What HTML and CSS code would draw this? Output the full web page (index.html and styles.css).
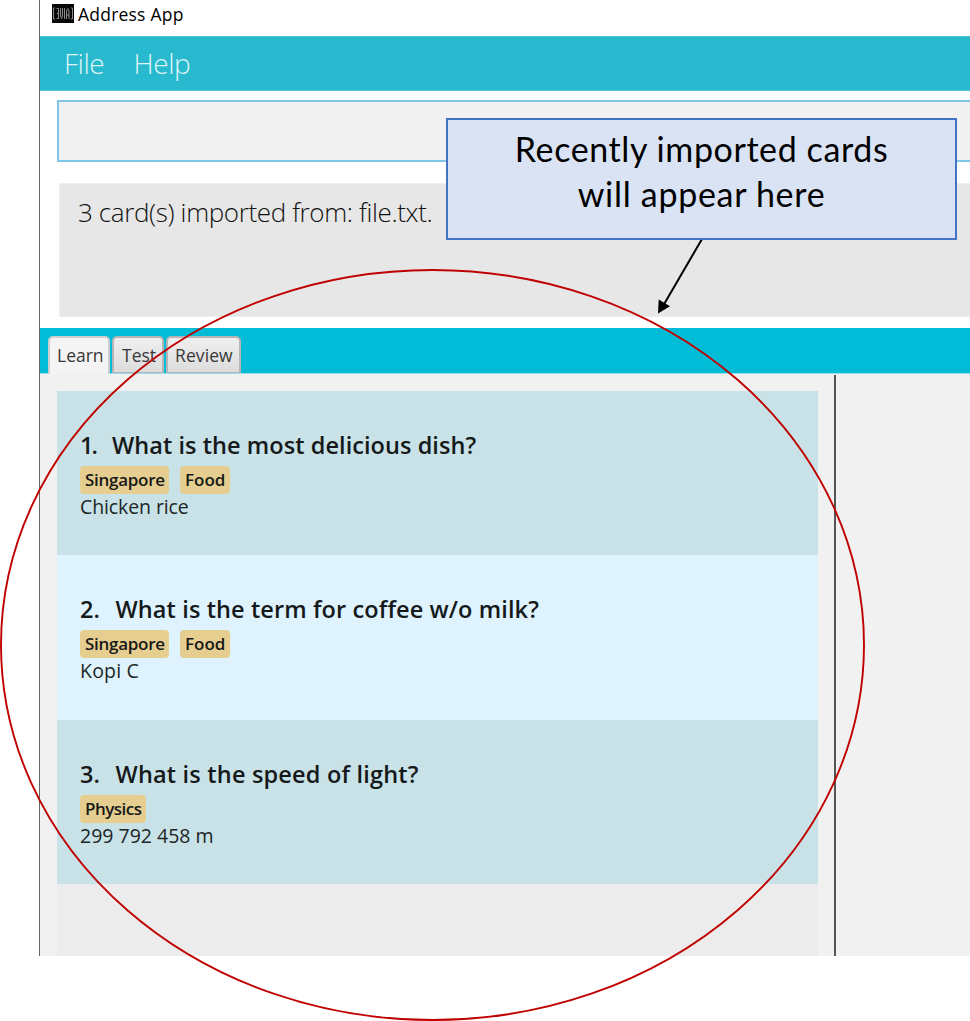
FILE: index.html
```
<!DOCTYPE html>
<html lang="en">
<head>
<meta charset="utf-8">
<title>Address App</title>
<link rel="stylesheet" href="styles.css">
</head>
<body>
<div class="window">
  <header class="title-bar">
    <svg class="app-icon" width="22" height="19" viewBox="0 0 22 19">
      <rect width="22" height="19" fill="#080808"/>
      <g fill="none" stroke="#8c8c8c" stroke-width="1">
        <path d="M3 4H1.500V15H3M19 4H20.500V15H19"/>
        <path d="M4.500 4.500H6.500V14.500H4.500M5 9.500H6.500M8.500 4V12L9.500 14.500L10.500 12V4M12.500 4V15M14.500 15V7L15.800 4.500L17 7V15M14.500 11H17"/>
      </g>
    </svg>
    <span class="title">Address App</span>
  </header>
  <nav class="menu-bar"><span class="menu-file">File</span><span class="menu-help">Help</span></nav>
  <section class="command-area">
    <div class="command-box"></div>
    <div class="result-box"><span class="result">3 card(s) imported from: file.txt.</span></div>
  </section>
  <div class="tab-bar">
    <div class="tab tab-learn"><span>Learn</span></div>
    <div class="tab tab-test"><span>Test</span></div>
    <div class="tab tab-review"><span>Review</span></div>
  </div>
  <main class="content">
    <div class="list">
      <article class="card">
        <h2><span class="num one">1.</span><span class="q1">What is the most delicious dish?</span></h2>
        <div class="tags"><span class="tag singapore">Singapore</span><span class="tag food">Food</span></div>
        <p><span class="a1">Chicken rice</span></p>
      </article>
      <article class="card light">
        <h2><span class="num">2.</span><span class="q2">What is the term for coffee w/o milk?</span></h2>
        <div class="tags"><span class="tag singapore">Singapore</span><span class="tag food">Food</span></div>
        <p><span class="a2">Kopi C</span></p>
      </article>
      <article class="card">
        <h2><span class="num">3.</span><span class="q3">What is the speed of light?</span></h2>
        <div class="tags"><span class="tag physics">Physics</span></div>
        <p><span class="a3">299 792 458 m</span></p>
      </article>
    </div>
    <div class="detail"></div>
  </main>
</div>
<svg class="annotation" width="970" height="1021" viewBox="0 0 970 1021">
  <ellipse cx="432.500" cy="645" rx="431.500" ry="375" fill="none" stroke="#c00000" stroke-width="1.900"/>
  <path d="M702 239L663 306" stroke="#000" stroke-width="2"/>
  <path d="M658 313.500L658.700 299.500L670 306.300Z" fill="#000"/>
</svg>
<div class="callout"><span class="c1">Recently imported cards</span><span class="c2">will appear here</span></div>
</body>
</html>
```

FILE: styles.css
```
* { box-sizing: border-box; }
body { margin: 0; width: 970px; height: 1021px; overflow: hidden; background: #fff; font-family: "Open Sans", "Noto Sans", sans-serif; color: #202526; position: relative; }
.window { margin-left: 39px; height: 956px; border-left: 1px solid #666; display: flex; flex-direction: column; }
span { white-space: nowrap; }
.title-bar { height: 35.500px; padding: 4px 0 0 12px; display: flex; align-items: flex-start; gap: 4px; }
.title { font: 17.5px/20px "Open Sans", sans-serif; letter-spacing: 0.22px; color: #000; }
.menu-bar { height: 55px; background: #29b9ce; border-top: 1px solid #4cc5d6; border-bottom: 1px solid #4cc5d6; display: flex; align-items: center; padding: 0 0 1px 24px; gap: 29.500px; color: #def5f8; font-size: 28px; font-weight: 300; letter-spacing: -0.5px; }
.command-area { height: 237.500px; padding: 9.500px 0 0 17px; }
.command-box { height: 62px; background: #f1f1f1; border: 2px solid #7fc6e8; border-right: 0; }
.result-box { height: 134px; margin: 21px 0 0 2px; padding: 9px 0 0 18px; background: #e7e7e7; border: 1px solid #efefef; border-right: 0; font-size: 26px; line-height: 38px; font-weight: 300; letter-spacing: -0.37px; color: #111; }
.tab-bar { height: 46px; background: #00bcd7; border-bottom: 1px solid #9bddeb; padding: 8px 0 0 8px; display: flex; gap: 2px; }
.tab { height: 37px; border: 2px solid #b3b5b6; border-bottom-width: 1px; border-radius: 5px 5px 0 0; background: linear-gradient(#efefef, #dcdcdc); font-size: 17.5px; line-height: 35px; color: #383838; padding-left: 7px; }
.tab-learn { width: 62px; height: 38px; background: #f4f4f4; border-bottom: 0; border-color: #cecece; }
.tab-test { width: 52px; padding-left: 8px; }
.tab-review { width: 75px; letter-spacing: 0.1px; }
.content { flex: 1; background: #f1f1f1; display: flex; padding: 1px 0 0 16.500px; }
.list { width: 761.500px; margin-top: 16px; background: #ececec; }
.detail { flex: 1; margin-left: 16px; border-left: 2px solid #555; }
.card { height: 164.300px; background: #c8e2e7; padding: 37px 0 0 23.500px; }
.light { background: #dff3ff; }
h2 { margin: 0; font-size: 23.500px; line-height: 34px; height: 38px; font-weight: 600; color: #15191a; display: flex; }
.num { width: 35.500px; }
.one { width: 32px; letter-spacing: -2px; }
.q1 { letter-spacing: 0.06px; }
.q2 { letter-spacing: 0.11px; }
.q3 { letter-spacing: 0.19px; }
.tags { display: flex; gap: 11px; }
.tag { height: 28px; background: #e6ce90; border-radius: 4px; padding-left: 5px; font-size: 17px; line-height: 28px; font-weight: 600; color: #151817; }
.singapore { width: 89px; letter-spacing: -0.28px; }
.food { width: 50px; }
.physics { width: 66px; letter-spacing: -0.5px; }
p { margin: -1px 0 0; font-size: 19.500px; line-height: 28px; }
.a1 { letter-spacing: -0.1px; }
.a2 { letter-spacing: 0.2px; }
.annotation { position: absolute; left: 0; top: 0; }
.callout { position: absolute; left: 446px; top: 118px; width: 511px; height: 122px; background: #dae3f3; border: 2px solid #4472c4; display: flex; flex-direction: column; align-items: center; padding-top: 6px; font: 34px/45px Lato, sans-serif; color: #000; }
.c1 { letter-spacing: 0.6px; }
.c2 { letter-spacing: 0.7px; }
```
